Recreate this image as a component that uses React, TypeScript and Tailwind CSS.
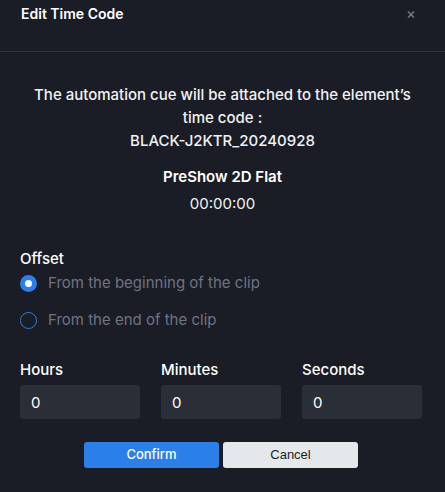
import React, { useState } from 'react';

export default function App() {
  const [offset, setOffset] = useState<'start' | 'end'>('start');

  const fields = ['Hours', 'Minutes', 'Seconds'];

  return (
    <div className="w-[445px] h-[492px] bg-[#1b1d26] text-white font-['Inter',sans-serif] flex flex-col">
      {/* Header */}
      <div className="h-[52px] border-b border-[#2c2f38] px-[21px] flex items-start justify-between">
        <h2 className="text-[14px] font-semibold leading-none mt-[7px]">Edit Time Code</h2>
        <button className="text-[#7d818c] text-[15px] leading-none mt-[6px] mr-[8px]">×</button>
      </div>

      {/* Body */}
      <div className="flex flex-col px-[20px]">
        <div className="mt-[31px] text-center text-[15px] leading-[23px] font-medium text-[#f1f2f4]">
          <p className="px-[12px]">The automation cue will be attached to the element’s time code :</p>
          <p>BLACK-J2KTR_20240928</p>
        </div>
        <p className="mt-[13px] text-center text-[15px] font-semibold leading-[23px]">PreShow 2D Flat</p>
        <p className="mt-[4px] text-center text-[15px] leading-[23px] text-[#f1f2f4]">00:00:00</p>

        <p className="mt-[34px] text-[15px] font-medium leading-[20px]">Offset</p>
        <div className="flex flex-col gap-[19px] mt-[5px]">
          <label className="flex items-center gap-[11px] cursor-pointer" onClick={() => setOffset('start')}>
            <span className={offset === 'start'
              ? 'w-[17px] h-[17px] rounded-full bg-[#2a7fe8] flex items-center justify-center'
              : 'w-[17px] h-[17px] rounded-full border border-[#2a7fe8]'}>
              {offset === 'start' && <span className="w-[7px] h-[7px] rounded-full bg-white" />}
            </span>
            <span className="text-[15px] text-[#6f7382] leading-[18px]">From the beginning of the clip</span>
          </label>
          <label className="flex items-center gap-[11px] cursor-pointer" onClick={() => setOffset('end')}>
            <span className={offset === 'end'
              ? 'w-[17px] h-[17px] rounded-full bg-[#2a7fe8] flex items-center justify-center'
              : 'w-[17px] h-[17px] rounded-full border border-[#2a7fe8]'}>
              {offset === 'end' && <span className="w-[7px] h-[7px] rounded-full bg-white" />}
            </span>
            <span className="text-[15px] text-[#6f7382] leading-[18px]">From the end of the clip</span>
          </label>
        </div>

        <div className="grid grid-cols-[120px_120px_120px] gap-[21px] mt-[31px]">
          {fields.map(f => (
            <div key={f} className="flex flex-col">
              <span className="text-[15px] font-medium leading-[20px]">{f}</span>
              <input
                defaultValue="0"
                className="mt-[5px] h-[34px] w-[120px] bg-[#2a2e37] rounded-[3px] px-[11px] text-[15px] text-white outline-none"
              />
            </div>
          ))}
        </div>

        <div className="flex gap-[4px] mt-[23px] ml-[64px]">
          <button className="w-[135px] h-[26px] rounded-[3px] bg-[#2a7fe8] text-white text-[13px] font-medium">Confirm</button>
          <button className="w-[135px] h-[26px] rounded-[3px] bg-[#e4e8eb] text-[#1b1d26] text-[13px] font-['Liberation_Sans',sans-serif]">Cancel</button>
        </div>
      </div>
    </div>
  );
}
